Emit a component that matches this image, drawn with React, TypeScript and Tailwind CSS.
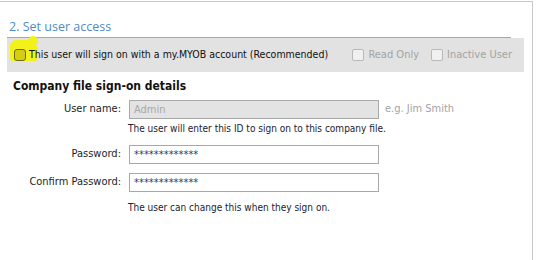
import React from 'react'

const tahoma = { fontFamily: '"DejaVu Sans Condensed", "DejaVu Sans", sans-serif' }

function DisabledCheck({ label }: { label: string }) {
  return (
    <label className="flex items-center gap-[4px] text-[#a3a3a3]">
      <span className="w-[12px] h-[12px] rounded-[2px] border border-[#b8b8b8] bg-[#f0f0f0]" />
      {label}
    </label>
  )
}

function Row({ label, children }: { label: string; children: React.ReactNode }) {
  return (
    <div className="flex items-center">
      <span className="w-[116px] text-right pr-[8px] text-[#1e1e1e]">{label}</span>
      {children}
    </div>
  )
}

export default function App() {
  return (
    <div className="w-[553px] h-[260px] bg-white overflow-hidden text-[11px]" style={tahoma}>
      <div className="w-[533px] h-[259px] mt-[1px] border-t border-r border-[#c9c9c9]">
        <div className="pl-[7px] pt-[14px] w-[511px]">
          <h2
            className="pl-[2px] h-[22px] text-[12.5px] leading-[22px] text-[#4d8bc9] border-b border-[#a6a6a6]"
            style={{ fontFamily: '"Open Sans", sans-serif' }}
          >
            2. Set user access
          </h2>
        </div>
        <div className="ml-[7px] w-[517px] h-[34px] bg-[#e2e2e2] flex items-center pl-[7px] pr-[12px]">
          <label className="relative flex items-center gap-[3px] text-[#111] text-[10.5px]">
            <span className="absolute left-[-4px] top-[-7px] w-[28px] h-[21px] rounded-[6px_10px_4px_4px] bg-[#f2f21a]" />
            <span className="absolute left-[14px] top-[-11px] w-[10px] h-[8px] rounded-t-[5px] bg-[#f2f21a]" />
            <span className="relative w-[12px] h-[12px] rounded-[3px] border border-[#6e6a1c] bg-[#d6cc12]" />
            <span className="relative">This user will sign on with a my.MYOB account (Recommended)</span>
          </label>
          <div className="ml-auto flex items-center gap-[12px]">
            <DisabledCheck label="Read Only" />
            <DisabledCheck label="Inactive User" />
          </div>
        </div>
        <div className="pl-[13px] pt-[6px]">
          <h3 className="text-[12px] font-bold text-[#111] leading-[16px]">Company file sign-on details</h3>
          <div className="mt-[6px] flex flex-col">
            <Row label="User name:">
              <div className="w-[250px] h-[19px] border border-[#a8a8a8] bg-[#e3e3e3] pl-[4px] leading-[17px] text-[#a8a8a8]">
                Admin
              </div>
              <span className="ml-[6px] text-[#a3a3a3]">e.g. Jim Smith</span>
            </Row>
            <div className="pl-[115px] mt-[3px] leading-[13px] text-[10px] text-[#1a2233]">
              The user will enter this ID to sign on to this company file.
            </div>
            <div className="mt-[10px]">
              <Row label="Password:">
                <div className="w-[250px] h-[19px] border border-[#a8a8a8] bg-white pl-[4px] leading-[17px] text-[#23406e]">
                  *************
                </div>
              </Row>
            </div>
            <div className="mt-[9px]">
              <Row label="Confirm Password:">
                <div className="w-[250px] h-[19px] border border-[#a8a8a8] bg-white pl-[4px] leading-[17px] text-[#23406e]">
                  *************
                </div>
              </Row>
            </div>
            <div className="pl-[115px] mt-[9px] leading-[13px] text-[10px] text-[#1a2233]">
              The user can change this when they sign on.
            </div>
          </div>
        </div>
      </div>
    </div>
  )
}
